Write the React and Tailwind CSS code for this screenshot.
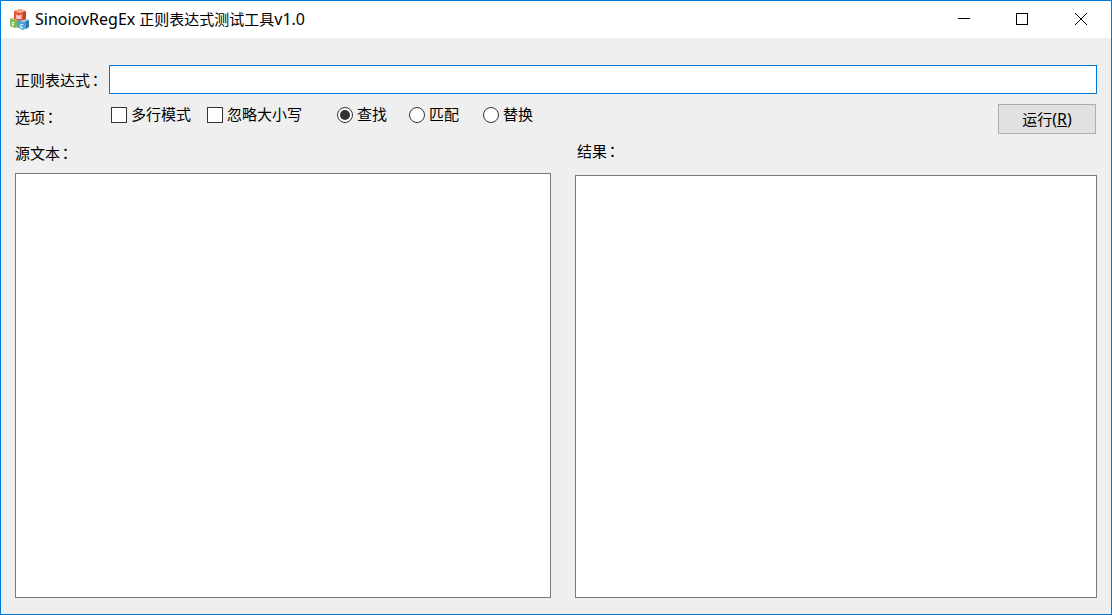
import { useState } from "react";

const cjk = "font-['Noto_Sans','Noto_Sans_CJK_SC',sans-serif]";

const Colon = () => <span className="-ml-[2px] font-['Noto_Sans_CJK_TC',sans-serif]">：</span>;

const AppIcon = () => (
    <svg width="20" height="21" viewBox="0 0 20 21" className="mb-px shrink-0">
        {/* green cube */}
        <path d="M0 10l5-2 5 2v7l-5 2-5-2z" fill="#7dbb52" />
        <path d="M7 11l3-1v7l-3 2z" fill="#5c9a3c" />
        <path d="M0 10l5-2 5 2-5 1z" fill="#bcdc96" />
        <text x="1.5" y="17" fontSize="6" fontWeight="700" fill="#fff">F</text>
        {/* blue cube */}
        <path d="M7 11l6-2 6 2v7l-6 3-6-3z" fill="#4ea2d8" />
        <path d="M16 12l3-1v7l-3 2z" fill="#2f78aa" />
        <path d="M7 11l6-2 6 2-6 2z" fill="#a0d4f0" />
        <text x="9.5" y="19" fontSize="6" fontWeight="700" fill="#fff">C</text>
        {/* red cube */}
        <path d="M4 2l6-2 6 2v8l-6 2-6-2z" fill="#e8583a" />
        <path d="M13 3l3-1v8l-3 1z" fill="#c53f25" />
        <path d="M4 2l6-2 6 2-6 2z" fill="#f6a98a" />
        <text x="6" y="9.5" fontSize="6" fontWeight="700" fill="#fff">M</text>
    </svg>
);

const TitleBar = () => (
    <div className="flex h-[37px] items-center bg-white pl-[9px]">
        <AppIcon />
        <span className="mb-px ml-[5px] text-[15px] leading-none text-black">
            <span className="mr-[4px] text-[16px]">SinoiovRegEx</span>正则表达式测试工具<span className="text-[16px]">v1.0</span>
        </span>
        <div className="ml-auto flex h-full items-center">
            <svg width="59" height="37" viewBox="0 0 59 37">
                <path d="M23 17.5h12" stroke="#000" fill="none" />
            </svg>
            <svg width="59" height="37" viewBox="0 0 59 37">
                <rect x="22.5" y="12.5" width="11" height="11" stroke="#000" fill="none" />
            </svg>
            <svg width="58" height="37" viewBox="0 0 58 37">
                <path d="M22 12l12 12M34 12l-12 12" stroke="#000" fill="none" />
            </svg>
        </div>
    </div>
);

const Check = ({ label, className }) => (
    <label className={`flex items-center ${className}`}>
        <span className="box-border h-4 w-4 border border-[#333] bg-white" />
        <span className="mb-[2px] ml-1 text-[15px] leading-4 text-black">{label}</span>
    </label>
);

const Radio = ({ label, checked, className }) => (
    <label className={`flex items-center ${className}`}>
        <span className="box-border flex h-4 w-4 items-center justify-center rounded-full border border-[#333] bg-white">
            {checked && <span className="h-2.5 w-2.5 rounded-full bg-[#333]" />}
        </span>
        <span className="mb-[2px] ml-1 text-[15px] leading-4 text-black">{label}</span>
    </label>
);

const App = () => {
    const [pattern, setPattern] = useState("");
    return (
        <div className={`flex h-[615px] w-[1112px] flex-col overflow-hidden border border-[#0078d7] bg-[#efefef] ${cjk}`}>
            <TitleBar />
            <div className="flex min-h-0 flex-1 flex-col pl-[14px] pr-[14px] pb-4">
                <div className="mt-[27px] flex h-[29px] items-center">
                    <span className="w-[94px] text-[15px] leading-none text-black">正则表达式<Colon /></span>
                    <input
                        value={pattern}
                        onChange={(e) => setPattern(e.target.value)}
                        className="box-border h-[29px] flex-1 border border-[#0078d7] bg-white outline-none"
                    />
                </div>
                <div className="mt-[10px] flex h-[30px] items-start">
                    <span className="mt-[5px] w-[96px] text-[15px] leading-4 text-black">选项<Colon /></span>
                    <div className="mt-[2px] flex items-center">
                        <Check label="多行模式" />
                        <Check label="忽略大小写" className="ml-4" />
                        <Radio label="查找" checked className="ml-[35px]" />
                        <Radio label="匹配" className="ml-[22px]" />
                        <Radio label="替换" className="ml-6" />
                    </div>
                    <button className="ml-auto mr-px box-border h-[30px] w-[98px] border border-[#adadad] bg-[#e1e1e1] text-[15px] leading-none text-black">
                        运行<span className="text-[16px]">(<span className="underline">R</span>)</span>
                    </button>
                </div>
                <div className="flex min-h-0 flex-1 gap-6">
                    <div className="flex w-[536px] flex-col">
                        <span className="mt-[11px] h-7 text-[15px] leading-4 text-black">源文本<Colon /></span>
                        <textarea className="box-border min-h-0 flex-1 resize-none border border-[#7a7a7a] bg-white outline-none" />
                    </div>
                    <div className="flex flex-1 flex-col">
                        <span className="ml-[2px] mt-[9px] h-8 text-[15px] leading-4 text-black">结果<Colon /></span>
                        <textarea className="box-border min-h-0 flex-1 resize-none border border-[#7a7a7a] bg-white outline-none" />
                    </div>
                </div>
            </div>
        </div>
    );
};

export default App;
